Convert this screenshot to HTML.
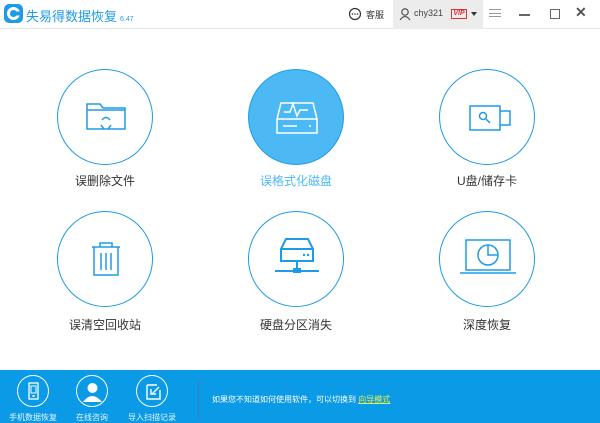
<!DOCTYPE html>
<html><head><meta charset="utf-8"><style>
*{margin:0;padding:0;box-sizing:border-box}
body{width:600px;height:423px;background:#fff;font-family:"Liberation Sans","Noto Sans CJK SC",sans-serif;position:relative;overflow:hidden}
.hdr{position:absolute;left:0;top:0;width:600px;height:29px;border-bottom:1px solid #e6e6e6}
.c{position:absolute;width:96px;height:96px;border:1.5px solid #1e9be6;border-radius:50%}
.c svg{position:absolute;left:0;top:0}
.lbl{position:absolute;width:160px;text-align:center;font-size:12px;color:#333}
.ft{position:absolute;left:0;top:370px;width:600px;height:53px;background:#0a9ae6}
.fi{position:absolute;top:5px;width:32px;height:32px;border:1.5px solid #fff;border-radius:50%}
.ftx{position:absolute;top:42px;font-size:8px;color:#e8f4ff;width:70px;text-align:center}
</style></head><body>
<div class="hdr">
 <svg style="position:absolute;left:4px;top:4px" width="19" height="19"><rect x="0" y="0" width="19" height="19" rx="5" fill="#1e9be6"/><circle cx="9.5" cy="9.5" r="5" fill="none" stroke="#fff" stroke-width="3"/><rect x="11.5" y="7.5" width="5" height="4" fill="#1e9be6"/></svg>
 <div style="position:absolute;left:26px;top:6px;font-size:13px;color:#1e9be6">失易得数据恢复<span style="font-size:7px;margin-left:3px">6.47</span></div>
 <svg style="position:absolute;left:348px;top:7px" width="14" height="14"><circle cx="7" cy="7" r="5.5" fill="none" stroke="#333" stroke-width="1.2"/><circle cx="4.5" cy="7" r=".8" fill="#333"/><circle cx="7" cy="7" r=".8" fill="#333"/><circle cx="9.5" cy="7" r=".8" fill="#333"/></svg>
 <div style="position:absolute;left:366px;top:8px;font-size:9px;color:#333">客服</div>
 <div style="position:absolute;left:393px;top:0;width:90px;height:29px;background:#ececec"></div>
 <svg style="position:absolute;left:399px;top:7px" width="12" height="14"><circle cx="6" cy="5" r="3.2" fill="none" stroke="#444" stroke-width="1.1"/><path d="M1 13 Q6 6 11 13" fill="none" stroke="#444" stroke-width="1.1"/></svg>
 <div style="position:absolute;left:414px;top:8px;font-size:9px;color:#444">chy321</div>
 <div style="position:absolute;left:451px;top:9px;width:16px;height:10px;border:1px solid #d33;color:#d33;font-size:7px;font-style:italic;font-weight:bold;line-height:8px;text-align:center">VIP</div>
 <div style="position:absolute;left:471px;top:12px;border:3px solid transparent;border-top:4px solid #333"></div>
 <div style="position:absolute;left:489px;top:9px;width:12px;height:8px;border-top:1px solid #999;border-bottom:1px solid #999"></div>
 <div style="position:absolute;left:489px;top:13px;width:12px;height:1px;background:#999"></div>
 <div style="position:absolute;left:519px;top:14px;width:11px;height:1.5px;background:#666"></div>
 <div style="position:absolute;left:550px;top:9px;width:10px;height:10px;border:1px solid #666"></div>
 <div style="position:absolute;left:575px;top:4px;font-size:14px;color:#555;font-weight:bold">✕</div>
</div>

<div class="c" style="left:57px;top:69px"><svg width="96" height="96"><g fill="none" stroke="#1e9be6" stroke-width="1.5"><path d="M29 34 h13 l3 4 h22 v21 h-38z"/><path d="M29 40 h38"/><path d="M44 50 q4-5 8 0 M43 55 l3 4 M53 55 l-3 4"/></g></svg></div>
<div class="lbl" style="left:25px;top:172px">误删除文件</div>

<div class="c" style="left:248px;top:69px;background:#4cb9f5;border-color:#1e9be6"><svg width="96" height="96"><g fill="none" stroke="#fff" stroke-width="1.5"><path d="M32 33 h32 l4 16 v14 h-40 v-14z M28 49 h40"/><path d="M35 42 h6 l3-8 l4 12 l3-6 h8"/><path d="M34 56 h14 M60 56 h2"/></g></svg></div>
<div class="lbl" style="left:216px;top:172px;color:#4cb9f5">误格式化磁盘</div>

<div class="c" style="left:439px;top:69px"><svg width="96" height="96"><g fill="none" stroke="#1e9be6" stroke-width="1.5"><rect x="30" y="36" width="30" height="24"/><path d="M60 41 h10 v14 h-10"/><circle cx="43" cy="46" r="3.5"/><path d="M46 49 l4 4"/></g></svg></div>
<div class="lbl" style="left:407px;top:172px">U盘/储存卡</div>

<div class="c" style="left:57px;top:211px"><svg width="96" height="96"><g fill="none" stroke="#1e9be6" stroke-width="1.5"><path d="M34 35 h28 M42 35 v-4 h12 v4 M36 35 v28 h24 v-28 M43 41 v17 M48 41 v17 M53 41 v17"/></g></svg></div>
<div class="lbl" style="left:25px;top:316px">误清空回收站</div>

<div class="c" style="left:248px;top:211px"><svg width="96" height="96"><g fill="none" stroke="#1e9be6" stroke-width="2"><path d="M32 37 l5-10 h22 l5 10 v12 h-32z M32 37 h32"/><path d="M48 49 v7 M26 59 h44"/></g><rect x="44" y="56" width="8" height="5" fill="#1e9be6"/><circle cx="55" cy="43" r="1.2" fill="#1e9be6"/><circle cx="59" cy="43" r="1.2" fill="#1e9be6"/></svg></div>
<div class="lbl" style="left:216px;top:316px">硬盘分区消失</div>

<div class="c" style="left:439px;top:211px"><svg width="96" height="96"><g fill="none" stroke="#1e9be6" stroke-width="1.5"><rect x="26" y="28" width="44" height="30"/><path d="M20 61 h56"/><circle cx="48" cy="43" r="10"/><path d="M48 33 v10 h10"/></g></svg></div>
<div class="lbl" style="left:407px;top:316px">深度恢复</div>

<div class="ft">
 <div class="fi" style="left:17px"><svg width="32" height="32"><rect x="11" y="7" width="9" height="16" fill="none" stroke="#fff" stroke-width="1.3"/><rect x="13" y="10" width="5" height="7" fill="none" stroke="#fff"/><rect x="14.5" y="19" width="2" height="2" fill="#fff"/></svg></div>
 <div class="ftx" style="left:-2px">手机数据恢复</div>
 <div class="fi" style="left:76px"><svg width="32" height="32"><circle cx="15.5" cy="12" r="5" fill="#fff"/><path d="M6 26 q9-12 19 0z" fill="#fff"/></svg></div>
 <div class="ftx" style="left:57px">在线咨询</div>
 <div class="fi" style="left:136px"><svg width="32" height="32"><path d="M10 9 h10 M10 9 v14 h13 v-9" fill="none" stroke="#fff" stroke-width="1.4"/><path d="M22 11 l-7 7 M14 13 v5 h5" fill="none" stroke="#fff" stroke-width="1.4"/></svg></div>
 <div class="ftx" style="left:117px">导入扫描记录</div>
 <div style="position:absolute;left:198px;top:10px;width:1px;height:40px;background:#3a7fc0"></div>
 <div style="position:absolute;left:212px;top:24px;font-size:8px;color:#fff">如果您不知道如何使用软件，可以切换到 <span style="color:#e8f04a;text-decoration:underline">向导模式</span></div>
</div>
</body></html>
